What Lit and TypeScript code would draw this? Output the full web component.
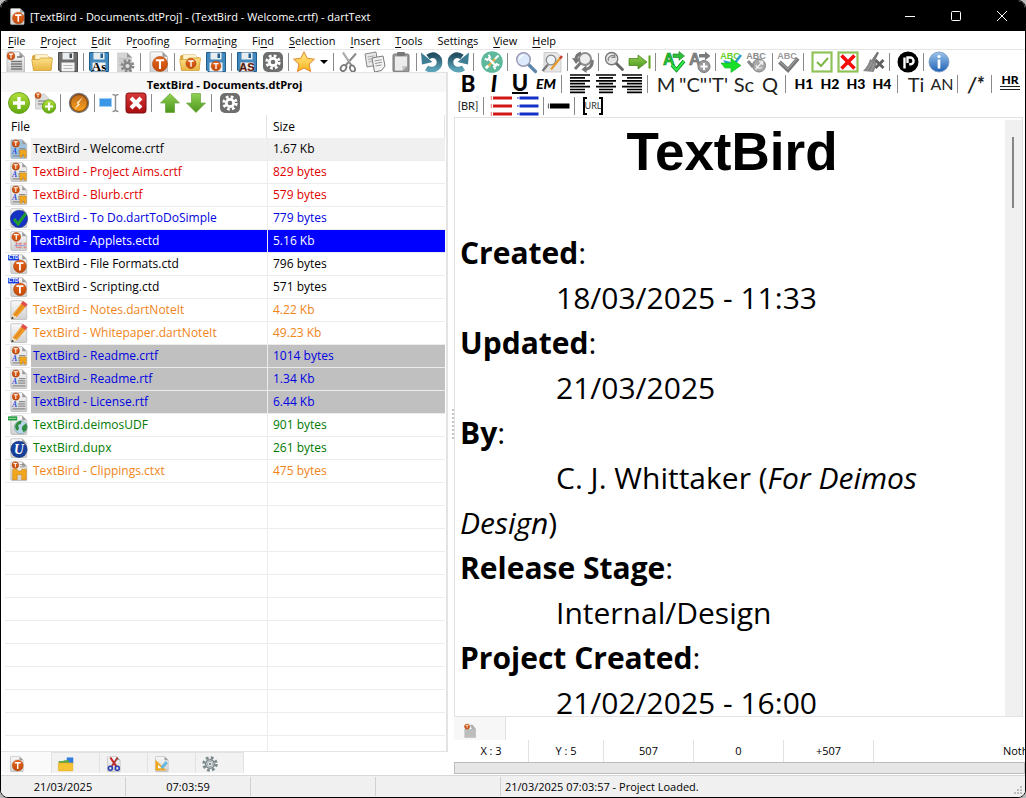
import { LitElement, html, svg, css, nothing } from "lit";
import { customElement, state } from "lit/decorators.js";
import { classMap } from "lit/directives/class-map.js";

/* ---------- shared drawing parts (22 x 22 grid) ---------- */

const page = (fill = "url(#paper)") => svg`
  <path d="M3 .8h11.500l5 5V20.500a1 1 0 0 1-1 1H3.500a1.500 1.500 0 0 1-1.500-1.500V1.800a1 1 0 0 1 1-1z" fill=${fill} stroke="#b4b4b4" stroke-width=".8"/>
  <path d="M14.500 .8v5h5z" fill="#9d9d9d"/>`;

const tBadge = (cx: number, cy: number, r: number) => svg`
  <circle cx=${cx} cy=${cy} r=${r} fill="url(#orange)" stroke="#a8410a" stroke-width=".6"/>
  <path d="M${cx - r * 0.55} ${cy - r * 0.5}h${r * 1.1}M${cx} ${cy - r * 0.5}v${r * 1.15}" stroke="#fff" stroke-width=${r * 0.28} fill="none"/>`;

const floppy = (fill: string, edge: string) => svg`
  <path d="M1.500 1.500h19v19H3l-1.500-1.500z" fill=${fill} stroke=${edge}/>
  <path d="M5.500 1.500h11v7h-11z" fill="#e8edf0"/><path d="M12.500 2.500h2.500v4.500h-2.500z" fill=${edge}/>
  <path d="M4.500 11.500h13v9h-13z" fill="#f4f4f4"/>`;

const folder = svg`
  <path d="M1 6q0-2 2-2h5l2 2h9q1.500 0 1.500 1.500V19H2.500z" fill="#d9a436"/>
  <path d="M4 3.500h12l3 4v6H4z" fill="#fff3cf" stroke="#d3b15e" stroke-width=".5"/>
  <path d="M.7 8.500h7.300l2-1.500h11.500L20 19.500H2.500z" fill="url(#gold)" stroke="#cf9a2c" stroke-width=".7"/>`;

const cogPath = (cx: number, cy: number, r: number, color: string, hole: string) => svg`
  <circle cx=${cx} cy=${cy} r=${r * 0.86} fill="none" stroke=${color} stroke-width=${r * 0.4}
    stroke-dasharray="${r * 0.37} ${r * 0.305}"/>
  <circle cx=${cx} cy=${cy} r=${r * 0.7} fill=${color}/><circle cx=${cx} cy=${cy} r=${r * 0.32} fill=${hole}/>`;

const cogTile = svg`<rect x="1" y="1" width="20" height="20" rx="5" fill="#6e6e6e"/>${cogPath(11, 11, 7.200, "#fff", "#6e6e6e")}`;

const lens = (ring: string, glass: string, handle: string) => svg`
  <path d="M13.500 13.500l7 7" stroke=${handle} stroke-width="3.200" stroke-linecap="round"/>
  <circle cx="8.500" cy="8.500" r="6.800" fill=${glass} stroke=${ring} stroke-width="1.500"/>
  <path d="M4.500 8a4.200 4.200 0 0 1 4-3.700" stroke="#fff" stroke-width="1.300" fill="none"/>`;

const abc = (fill: string) => svg`<text x="10" y="8" text-anchor="middle" font-family="Liberation Sans" font-weight="700" font-size="9" fill=${fill}>ABC</text>`;

const richDoc = (fill: string, clip: boolean) => svg`${page(fill)}${tBadge(7.500, 5, 4)}
  <text x="3.500" y="16" font-family="Liberation Serif" font-style="italic" font-weight="700" font-size="8" fill="#1f49d8">A</text>
  <path d="M11 10.500h7M10 13h8M10 15.500h8M4 18.500h14" stroke="#8d8d8d" stroke-width="1.300"/>
  ${clip ? svg`<path d="M12 12h7v8h-2.500v-3h-2v3H12z" fill="#f2a71e" stroke="#c9820c" stroke-width=".5"/>` : nothing}`;

const ctd = svg`${page()}${tBadge(12, 13.500, 7)}<rect x="-1" y="1" width="12" height="6" fill="#1237e0"/>
  <text x="5" y="6" text-anchor="middle" font-family="Liberation Sans" font-weight="700" font-size="5.500" fill="#fff">CTD</text>`;

const pencil = svg`${page()}<path d="M4 16L14 3l5 4L8.500 19z" fill="#f09a2a"/><path d="M13 4l2.500-3 5 3.800-2.500 3z" fill="#e1504f"/>
  <path d="M4 16l4.500 3-5.500 2z" fill="#f6dcae"/><path d="M3.300 18.500l2.200 1.500-3 1.300z" fill="#222"/><path d="M6 17.300L16 5" stroke="#c9730c" stroke-width=".8"/>`;

const bars = (widths: number[]) => svg`${widths.map((w, i) => svg`<path d="M${w < 0 ? 1 : 1 + (20 - w)} ${2 + i * 2.900}h${Math.abs(w)}" stroke="#000" stroke-width="1.700"/>`)}`;

const ICONS: Record<string, unknown> = {
  appPage: svg`${page()}${tBadge(12, 13, 7.500)}`,
  newDoc: svg`${page()}${tBadge(6, 5, 3.800)}<path d="M12 6h5M6 10.500h11M6 13h11M6 15.500h11M6 18h11" stroke="#777" stroke-width="1.400"/>`,
  folder,
  save: svg`${floppy("#6d6d6d", "#4c4c4c")}<path d="M6.500 14.500h9M6.500 17.500h9" stroke="#aaa" stroke-width=".8"/>`,
  saveAs: svg`${floppy("#4389bd", "#1f5d8c")}<text x="11" y="20" text-anchor="middle" font-family="Liberation Serif" font-weight="700" font-size="13" fill="#000">As</text>`,
  saveT: svg`${floppy("#4389bd", "#1f5d8c")}${tBadge(11, 15, 4.800)}`,
  saveAllAs: svg`${floppy("#4389bd", "#1f5d8c")}<text x="11" y="20" text-anchor="middle" font-family="Liberation Sans" font-weight="700" font-size="11" fill="#111" stroke="#e0522a" stroke-width=".3">AS</text>`,
  pageCog: svg`<path d="M3 1.500h10l5 5V21H3z" fill="#d4d4d4"/><path d="M13 1.500v5h5z" fill="#999"/><path d="M5 8h9M5 11h6M5 14h4" stroke="#b5b5b5"/>${cogPath(13.500, 15, 6.500, "#868686", "#ddd")}`,
  folderT: svg`${folder}${tBadge(12, 12.500, 5)}`,
  cog: cogTile,
  star: svg`<path d="M11 .8l3.200 6.500 7.200.9-5.300 5 1.400 7.300L11 17l-6.500 3.500 1.400-7.300-5.300-5 7.200-.9z" fill="url(#starfill)" stroke="#dd7a22" stroke-width=".9" stroke-linejoin="round"/>`,
  cut: svg`<path d="M5 1.500l8.500 13M18 2.500L8 14" stroke="#8b8b8b" stroke-width="2" fill="none"/><path d="M5 1.500l7 10" stroke="#ddd" stroke-width=".7"/><ellipse cx="5.500" cy="17" rx="2.600" ry="3.300" transform="rotate(35 5.500 17)" fill="none" stroke="#777" stroke-width="1.700"/><ellipse cx="14.500" cy="17.500" rx="2.400" ry="3.200" transform="rotate(-25 14.500 17.500)" fill="none" stroke="#777" stroke-width="1.700"/>`,
  copy: svg`<path d="M1 3l11-2 2 13-11 2z" fill="#e8e8e8" stroke="#888"/><path d="M3.500 6l7-1.200M4 8.500l7-1.200M4.400 11l5-1" stroke="#aaa"/><path d="M8 7l11-2 2 10-3.500 4.500-7 1.500z" fill="#f2f2f2" stroke="#7b7b7b"/><path d="M10.500 10l7-1.300M11 12.500l7-1.300M11.500 15l6-1.100" stroke="#999"/>`,
  paste: svg`<rect x="3" y="3" width="16" height="18" rx="1.500" fill="#9a9a9a" stroke="#747474"/><path d="M5 5.500h12V15l-4.500 4.500H5z" fill="#ececec"/><path d="M12.500 19.500V15H17z" fill="#c3c3c3"/><rect x="7" y="1" width="8" height="4" rx="1" fill="#777"/>`,
  undo: svg`<path d="M7 6C13 1.500 19 6 18.500 12c-.5 6-8 8.500-13 5" fill="none" stroke="url(#teal)" stroke-width="5.600"/><path d="M0 1.500l1 12 10.500-2.500z" fill="#3e7d93"/>`,
  redo: svg`<path d="M15 6C9 1.500 3 6 3.500 12c.5 6 8 8.500 13 5" fill="none" stroke="url(#teal)" stroke-width="5.600"/><path d="M22 1.500l-1 12-10.500-2.500z" fill="#3e7d93"/>`,
  tools: svg`<circle cx="11" cy="11" r="10.800" fill="#5db89c"/><path d="M7 15.500L15 7" stroke="#e7b24d" stroke-width="2.300"/><path d="M7 7l8.500 8.500" stroke="#fff" stroke-width="2.400"/><path d="M3.800 7.500l2.500 1.500L9 6.300 7.600 3.800M18.200 14.500l-2.500-1.500-2.700 2.700 1.400 2.500" fill="none" stroke="#fff" stroke-width="1.900"/><path d="M14 8l3.500-3.500" stroke="#fff" stroke-width="2"/><path d="M4.800 17.200l2.500-2.500" stroke="#fff" stroke-width="3"/>`,
  find: lens("#9b9bb5", "#dceafb", "#5d86a8"),
  findDoc: svg`<path d="M3 1.500h13l4 4V21H3z" fill="#e6e6e6" stroke="#bbb" stroke-width=".7"/><path d="M1.500 20L7 13.500" stroke="#777" stroke-width="2.300"/><circle cx="10" cy="9" r="4.800" fill="#eef3f7" stroke="#888" stroke-width="1.300"/><path d="M10 18.500L20 6" stroke="#e79a2b" stroke-width="2.200"/><path d="M19 7.500l2-2.500" stroke="#c7413a" stroke-width="2.500"/>`,
  findReplace: svg`<circle cx="13" cy="8" r="6" fill="#eee" stroke="#8d8d8d" stroke-width="2"/><path d="M8.500 12l-5.500 6" stroke="#777" stroke-width="3"/><path d="M4 8.500A7 7 0 0 1 9 2M20 9c1 5-2 9-7 9.500" stroke="#777" stroke-width="3" fill="none"/><path d="M0 7l4 6 4.500-5zM14.500 14l-5 4.500 5 3.500z" fill="#777"/>`,
  findGray: svg`<g transform="translate(1 0) scale(.9)">${lens("#777", "#e4e4e4", "#666")}<path d="M5 11a4.500 4.500 0 0 1 7-5M12 3v4H8" stroke="#888" stroke-width="1.300" fill="none"/></g>`,
  next: svg`<path d="M0 7.500h9V4l9 7-9 7v-3.500H0z" fill="url(#green)" stroke="#3d7d12" stroke-width=".7"/><path d="M20.500 4.500v13" stroke="#5aa21b" stroke-width="2"/>`,
  spellGo: svg`<text x="0" y="14" font-family="Liberation Sans" font-weight="700" font-size="16" fill="#23c933" stroke="#0c8a1b" stroke-width=".7">A</text><path d="M10 3h6V.5L21.500 5 16 9.300V6.500h-6z" fill="#2ebf3a" stroke="#0d7a1a" stroke-width=".6"/><path d="M9 14l4.500 5L21 10" fill="none" stroke="#0e8f1f" stroke-width="3.600"/><path d="M9 14l4.500 5L21 10" fill="none" stroke="#2fe84a" stroke-width="2"/>`,
  spellAdd: svg`<text x="0" y="14" font-family="Liberation Sans" font-weight="700" font-size="16" fill="#8a8a8a" stroke="#5f5f5f" stroke-width=".6">A</text><path d="M10 3h6V.5L21.500 5 16 9.300V6.500h-6z" fill="#7b7b7b"/><circle cx="15" cy="15.500" r="6" fill="#9b9b9b" stroke="#777"/><path d="M11.500 15.500h7M15 12v7" stroke="#fff" stroke-width="2"/>`,
  abcGo: svg`${abc("#62d02c")}<path d="M3 9l4 6 4-4z" fill="#2c9fd0"/><path d="M15 12l6-8" stroke="#2c9fd0" stroke-width="2.500"/><path d="M1 12h10V7.500l10 7-10 7V17H5z" fill="#18e029" stroke="#0fae20" stroke-width=".6"/>`,
  abcUndo: svg`${abc("#8a8a8a")}<circle cx="13" cy="14.500" r="6.500" fill="#a9a9a9" stroke="#808080"/><path d="M2 10l5 6" stroke="#888" stroke-width="3"/><path d="M9.500 18.500l7-8M13 10.500h3.500v3.500M10 14a4 4 0 0 0 6 2.500" stroke="#eee" stroke-width="1.400" fill="none"/>`,
  abcCheck: svg`${abc("#9a9a9a")}<path d="M2.500 11l8.500 8 10-11.500" stroke="#777" stroke-width="4" fill="none"/><path d="M3 11l8 7 9-10" stroke="#aaa" stroke-width="1" fill="none"/>`,
  boxCheck: svg`<rect x="1.500" y="1.500" width="19" height="19" fill="#fff" stroke="#8fc35a" stroke-width="2.200"/><path d="M6 11l4 4 7-8" fill="none" stroke="#7db743" stroke-width="1.900"/>`,
  boxCross: svg`<rect x="1.500" y="1.500" width="19" height="19" fill="#fff" stroke="#8fc35a" stroke-width="2.200"/><path d="M4.500 4.500l13 13M17.500 4.500l-13 13" stroke="#f50d0d" stroke-width="3.600"/>`,
  broom: svg`<path d="M14 .8l2 1-4.500 9-3-1.500z" fill="#777"/><path d="M7 8l6.500 3.500c0 4-2 7-3 9.500L0 20C4 16 6 12 7 8z" fill="#858585"/><path d="M9 11L4 20M11 12.500L8 21" stroke="#aaa" stroke-width=".7"/><path d="M12.500 9l8 8M20.500 9l-8 8" stroke="#5e5e5e" stroke-width="2.800"/>`,
  pMark: svg`<circle cx="11" cy="11" r="10.500" fill="#000"/><path d="M7.500 6.500v11M10.500 12V6.500h2.700a3.400 3.400 0 0 1 0 6.800h-1" stroke="#fff" stroke-width="2.400" fill="none"/>`,
  info: svg`<circle cx="11" cy="11" r="10" fill="url(#blue)" stroke="#7d9cc2" stroke-width=".9"/><circle cx="11" cy="5.500" r="1.600" fill="#fff"/><path d="M11 8.500v9" stroke="#fff" stroke-width="2.700"/>`,
  add: svg`<circle cx="11" cy="11" r="10.500" fill="url(#lime)" stroke="#5d9c11" stroke-width=".9"/><path d="M11 5v12M5 11h12" stroke="#fff" stroke-width="3.400"/>`,
  addDoc: svg`<path d="M1.500 2h9l4 4v11h-13z" fill="#ddd" stroke="#bbb" stroke-width=".6"/><path d="M4 9h8M4 12h8" stroke="#999" stroke-width="1.300"/>${tBadge(4, 3.500, 3)}<circle cx="15" cy="14.500" r="6.700" fill="url(#lime)" stroke="#5d9c11" stroke-width=".8"/><path d="M15 10.500v8M11 14.500h8" stroke="#fff" stroke-width="2.200"/>`,
  orb: svg`<circle cx="11" cy="11" r="9.500" fill="url(#amber)" stroke="#777" stroke-width="1.400"/><circle cx="11" cy="11" r="8.400" fill="none" stroke="#7a3c08" stroke-width="1"/><path d="M15 5l-4.500 6.500 1.500 1L6 17.500l4-5.500-1.500-1z" fill="#fff3c8"/>`,
  rename: svg`<rect x=".5" y="6.500" width="12" height="8" fill="#3a97e8" stroke="#9fcdf4"/><path d="M13.500 2.500q2.500 0 3 1.500.5-1.500 3-1.500M16.500 4v14M13.500 19.500q2.500 0 3-1.500.5 1.500 3 1.500" stroke="#8d8d8d" stroke-width="1.400" fill="none"/>`,
  remove: svg`<rect x="1" y="1" width="20" height="20" rx="2.500" fill="url(#redfill)" stroke="#7d0f10"/><path d="M6 6l10 10M16 6L6 16" stroke="#fff" stroke-width="4"/>`,
  up: svg`<path d="M11 1.500l9.500 9.500h-5v9.500h-9V11h-5z" fill="url(#green)" stroke="#6aa53b" stroke-width=".7"/>`,
  down: svg`<path d="M11 20.500L1.500 11h5V1.500h9V11h5z" fill="url(#green)" stroke="#6aa53b" stroke-width=".7"/>`,
  crtfOpen: richDoc("#9fc3df", true),
  crtf: richDoc("url(#paper)", true),
  rtf: richDoc("url(#paper)", false),
  todo: svg`${page()}<circle cx="11" cy="12" r="9.500" fill="#1433c4" stroke="#0b1f80" stroke-width=".6"/><path d="M5.500 12l4.500 5.500L18.500 6" fill="none" stroke="#1f9c2b" stroke-width="3.400"/>`,
  ectd: svg`${page()}${tBadge(8, 6.500, 4.800)}<path d="M8 11v7h4M8 14h4" stroke="#d77" fill="none"/><path d="M11 14h3M16 14h3M11 18h3M16 18h3" stroke="#e08a8a" stroke-width="2"/><path d="M6 16h12" stroke="#7f8fd8" stroke-width=".8"/>`,
  ctd,
  pencil,
  udf: svg`${page()}<circle cx="13" cy="13.500" r="7.200" fill="#b9d5ea" stroke="#8aa" stroke-width=".8"/><path d="M7 11q3-5 7-4.500l-1 3.500-3 1 1 4-2 2.500q-3-3-2-6.500zM15 12l4-3q2 4 0 8l-3 2-2-4z" fill="#2f8b3d"/><path d="M-1 1.500h10v4.500H-1z" fill="#1e9a3c"/><path d="M0 3.700h8" stroke="#bfe8c8" stroke-width=".9"/>`,
  dupx: svg`${page()}<circle cx="11" cy="12.500" r="9" fill="#16409c" stroke="#0c2766" stroke-width=".6"/><text x="11" y="18" text-anchor="middle" font-family="Liberation Serif" font-style="italic" font-weight="700" font-size="15" fill="#fff">U</text>`,
  clip: svg`${page()}${tBadge(7, 4.500, 3.700)}<path d="M4 9h5v2h5V9h5v11.500h-5V15H9v5.500H4z" fill="#f2a71e" stroke="#c9820c" stroke-width=".6"/><path d="M12 4h5M12 6.500h6" stroke="#888"/>`,
  tabFolders: svg`<path d="M12 2h9v8h-9z" fill="#2f7be0"/><path d="M1 7h6l2-1h6v11H1z" fill="#5aa547"/><path d="M.5 9.500h20V20.500H.5z" fill="#f6c333" stroke="#dfa61e" stroke-width=".6"/>`,
  tabCut: svg`${page()}<path d="M6 2l8 12" stroke="#c22" stroke-width="2.800"/><path d="M16 2L8 14" stroke="#a33" stroke-width="2.400"/><circle cx="6" cy="17" r="2.800" fill="none" stroke="#2338b4" stroke-width="2"/><circle cx="15.500" cy="17" r="2.800" fill="none" stroke="#2338b4" stroke-width="2"/>`,
  tabRuler: svg`${page()}<path d="M2 5v15h15z" fill="#f0a81f"/><path d="M5.500 12v5h5z" fill="#fff"/><path d="M9 15l7-8 3 3-7 8z" fill="#67b7dc"/>`,
  tabCog: svg`${cogPath(11, 11, 10, "#7d8a8c", "#eee")}<circle cx="11" cy="11" r="4.500" fill="none" stroke="#dfe4e4" stroke-width="1.200"/><circle cx="11" cy="11" r="1.800" fill="#7d8a8c"/>`,
  tabDoc: svg`<path d="M2 8h17v13H2z" fill="#bdbdbd"/><path d="M10 2h4l5 6h-6z" fill="#b0b0b0"/>${tBadge(6, 4.500, 3.800)}`,
  alignLeft: bars([-20, -15, -20, -15, -20, -15, -15]),
  alignCenter: svg`<path d="M1 2h20M4 4.900h14M1 7.800h20M4 10.700h14M1 13.600h20M4 16.500h14M4 19.400h14" stroke="#000" stroke-width="1.700"/>`,
  alignRight: bars([20, 15, 20, 15, 20, 15, 15]),
  listRed: svg`<path d="M2 3h19M2 11h19M2 19h19" stroke="#d01818" stroke-width="3"/><path d="M.3 1v4M.3 9v4M.3 17v4" stroke="#f08a8a" stroke-width="1.200"/>`,
  listBlue: svg`<path d="M2.500 3h19M2.500 11h19M2.500 19h19" stroke="#1430c8" stroke-width="3"/><path d="M0 3h1.700M0 11h1.700M0 19h1.700" stroke="#7a8cf0" stroke-width="2"/>`,
  rule: svg`<path d="M2 11H21.500" stroke="#000" stroke-width="5"/><path d="M.5 8.500v5" stroke="#666" stroke-width="1.200"/>`,
};

const icon = (name: string, cls = "ic") => html`<svg class=${cls} viewBox="0 0 22 22" aria-hidden="true">${ICONS[name]}</svg>`;

/* ---------- data ---------- */

type Tool = { id: string; label: string };
type Group = { lead?: boolean; tools: Tool[] };
const g = (lead: boolean, ...items: [string, string][]): Group => ({ lead, tools: items.map(([id, label]) => ({ id, label })) });

const MENUS: [string, string, string][] = [
  ["", "F", "ile"], ["", "P", "roject"], ["", "E", "dit"], ["P", "r", "oofing"], ["Forma", "t", "ing"], ["Fi", "n", "d"],
  ["", "S", "election"], ["", "I", "nsert"], ["", "T", "ools"], ["Settin", "g", "s"], ["", "V", "iew"], ["", "H", "elp"],
];

const MAIN: Group[] = [
  g(false, ["newDoc", "New"], ["folder", "Open"], ["save", "Save"]),
  g(false, ["saveAs", "Save as"], ["pageCog", "Document settings"]),
  g(true, ["appPage", "New project"]),
  g(false, ["folderT", "Open project"], ["saveT", "Save project"]),
  g(false, ["saveAllAs", "Save project as"], ["cog", "Project settings"]),
  g(false, ["star", "Favourites"], ["caret", "More favourites"]),
  g(false, ["cut", "Cut"], ["copy", "Copy"], ["paste", "Paste"]),
  g(false, ["undo", "Undo"], ["redo", "Redo"]),
  g(true, ["tools", "Tools"]),
  g(true, ["find", "Find"], ["findDoc", "Find in document"]),
  g(false, ["findReplace", "Replace"]),
  g(false, ["findGray", "Find again"], ["next", "Find next"]),
  g(true, ["spellGo", "Check spelling"], ["spellAdd", "Add word"]),
  g(false, ["abcGo", "Next word"], ["abcUndo", "Undo word"]),
  g(false, ["abcCheck", "Proof"]),
  g(true, ["boxCheck", "Accept"], ["boxCross", "Reject"], ["broom", "Clear"]),
  g(true, ["pMark", "Publish"]),
  g(false, ["info", "About"]),
];

const PROJECT: Group[] = [
  g(false, ["add", "Add"], ["addDoc", "Add document"]),
  g(true, ["orb", "Run"]),
  g(false, ["rename", "Rename"], ["remove", "Remove"]),
  g(true, ["up", "Move up"], ["down", "Move down"]),
  g(true, ["cog", "Settings"]),
];

const GLYPHS: Record<string, [string, string]> = {
  B: ["B", "heavy"], I: ["I", "heavy slant"], U: ["U", "heavy under"], EM: ["EM", "bold14 slant"],
  M: ["M", "thin"], C: ['"C"', "thin"], T: ["'T'", "thin"], Sc: ["Sc", "thin"], Q: ["Q", "thin"],
  H1: ["H1", "bold14"], H2: ["H2", "bold14"], H3: ["H3", "bold14"], H4: ["H4", "bold14"],
  Ti: ["Ti", "thin"], AN: ["AN", "mid"], CM: ["/*", "thin strong"], HR: ["HR", "hr"], BR: ["[BR]", "tiny"], URL: ["URL", "url"],
};

const FORMAT: Group[] = [
  g(false, ["B", "Bold"], ["I", "Italic"], ["U", "Underline"], ["EM", "Emphasis"]),
  g(true, ["alignLeft", "Align left"], ["alignCenter", "Align centre"], ["alignRight", "Align right"]),
  g(true, ["M", "Mono"], ["C", "Cite"], ["T", "Term"], ["Sc", "Small caps"], ["Q", "Quote"]),
  g(true, ["H1", "Heading 1"], ["H2", "Heading 2"], ["H3", "Heading 3"], ["H4", "Heading 4"]),
  g(true, ["Ti", "Title"], ["AN", "Annotation"]),
  g(true, ["CM", "Comment"]),
  g(true, ["HR", "Horizontal rule"]),
];

const INSERT: Group[] = [
  g(false, ["BR", "Line break"]),
  g(true, ["listRed", "Numbered list"], ["listBlue", "Bullet list"]),
  g(false, ["rule", "Rule"]),
  g(true, ["URL", "Link"]),
];

type FileRow = { name: string; size: string; tone: string; ic: string };
const FILES: FileRow[] = [
  { name: "TextBird - Welcome.crtf", size: "1.67 Kb", tone: "current", ic: "crtfOpen" },
  { name: "TextBird - Project Aims.crtf", size: "829 bytes", tone: "red", ic: "crtf" },
  { name: "TextBird - Blurb.crtf", size: "579 bytes", tone: "red", ic: "crtf" },
  { name: "TextBird - To Do.dartToDoSimple", size: "779 bytes", tone: "blue", ic: "todo" },
  { name: "TextBird - Applets.ectd", size: "5.16 Kb", tone: "picked", ic: "ectd" },
  { name: "TextBird - File Formats.ctd", size: "796 bytes", tone: "plain", ic: "ctd" },
  { name: "TextBird - Scripting.ctd", size: "571 bytes", tone: "plain", ic: "ctd" },
  { name: "TextBird - Notes.dartNoteIt", size: "4.22 Kb", tone: "amber", ic: "pencil" },
  { name: "TextBird - Whitepaper.dartNoteIt", size: "49.23 Kb", tone: "amber", ic: "pencil" },
  { name: "TextBird - Readme.crtf", size: "1014 bytes", tone: "shaded", ic: "crtf" },
  { name: "TextBird - Readme.rtf", size: "1.34 Kb", tone: "shaded", ic: "rtf" },
  { name: "TextBird - License.rtf", size: "6.44 Kb", tone: "shaded", ic: "rtf" },
  { name: "TextBird.deimosUDF", size: "901 bytes", tone: "green", ic: "udf" },
  { name: "TextBird.dupx", size: "261 bytes", tone: "green", ic: "dupx" },
  { name: "TextBird - Clippings.ctxt", size: "475 bytes", tone: "amber", ic: "clip" },
];

@customElement("app-root")
export class AppRoot extends LitElement {
  @state() private tab = 0;

  static styles = css`
    :host { display: block; height: 100vh; background: #b9b9b9; font-family: "Open Sans", "Noto Sans", sans-serif; font-size: 12px; color: #000; }
    * { box-sizing: border-box; }
    button { font: inherit; color: inherit; background: none; border: 0; padding: 0; margin: 0; }
    .defs { display: block; width: 0; height: 0; }
    .window { height: 100vh; display: flex; flex-direction: column; background: #fff; border: 1px solid #000; border-radius: 8px; overflow: hidden; }

    .title { height: 30px; flex: none; background: #000; color: #fff; display: flex; align-items: center; padding-left: 8px; }
    .title .ic { width: 17px; height: 17px; }
    .caption { margin: 0 auto 0 4px; font-size: 11px; font-weight: 400; white-space: nowrap; }
    .winbtn { width: 46px; height: 30px; display: grid; place-items: center; }
    .winbtn svg { width: 12px; height: 12px; fill: none; stroke: #fff; }

    .menus { height: 18px; flex: none; display: flex; font-size: 11px; line-height: 20px; }
    .menus button { padding: 0 8px 0 7px; white-space: nowrap; }
    .menus u { text-underline-offset: 2px; }

    .tools { display: flex; flex: none; height: 22px; }
    .main { height: 23px; padding: 1px 0 0 2px; border-top: 1px solid #e6e6e6; }
    .group { display: flex; flex: none; }
    .group.lead { padding-left: 3px; }
    .group + .group::before { content: ""; width: 1px; height: 18px; margin: 2px; background: #8a8a8a; }
    .group.group.lead::before { margin-left: -1px; margin-right: 5px; }
    .tool { width: 26px; height: 22px; display: grid; place-items: center; flex: none; white-space: nowrap; font-family: Lato, "Open Sans", sans-serif; line-height: 22px; }
    .tool.caret { width: 14px; }
    .tool.caret::before { content: ""; border: 4px solid transparent; border-top-color: #000; border-bottom: 0; }
    .ic { width: 22px; height: 22px; display: block; overflow: visible; }
    .heavy { font-size: 22px; font-weight: 900; }
    .slant { font-style: italic; }
    .under span { line-height: 18px; border-bottom: 2px solid #000; }
    .bold14 { font-size: 14px; font-weight: 900; }
    .thin { font-size: 20px; color: #222; }
    .strong { font-weight: 700; font-style: italic; }
    .mid { font-size: 16px; color: #222; }
    .tiny { font-size: 11px; color: #222; }
    .hr { font-size: 12px; font-weight: 900; }
    .hr span { width: 20px; line-height: 12px; border-bottom: 4px double #222; margin-bottom: 4px; }
    .url { font-size: 9px; color: #333; }
    .url span { width: 20px; height: 18px; line-height: 18px; background:
      linear-gradient(#000, #000) 0 0 / 2px 100%, linear-gradient(#000, #000) 100% 0 / 2px 100%,
      linear-gradient(#000, #000) 0 0 / 4px 2px, linear-gradient(#000, #000) 0 100% / 4px 2px,
      linear-gradient(#000, #000) 100% 0 / 4px 2px, linear-gradient(#000, #000) 100% 100% / 4px 2px; background-repeat: no-repeat; }

    .work { flex: 1; min-height: 0; display: grid; grid-template-columns: 447px 6px minmax(0, 1fr); }
    .left { display: flex; flex-direction: column; min-height: 0; }
    .panel { flex: 1; min-height: 0; display: flex; flex-direction: column; border: solid #e3e3e3; border-width: 1px 2px 1px 0; }
    .heading { height: 19px; flex: none; background: #f7f7f7; text-align: center; font-size: 11px; font-weight: 700; line-height: 23px; margin: 0; padding-left: 2px; }
    .panel .tools { padding-left: 5px; height: 23px; }
    .list { flex: 1; min-height: 0; overflow: hidden; margin: 0 1px 0 4px; background:
      linear-gradient(#ececec, #ececec) 262px 0 / 1px 100% no-repeat,
      repeating-linear-gradient(#fff 0 22px, #ececec 22px 23px); }
    table { width: 100%; border-collapse: separate; border-spacing: 0; table-layout: fixed; }
    th, td { height: 23px; padding: 0 0 0 6px; text-align: left; font-weight: 400; line-height: 22px; white-space: nowrap; }
    th { background: #fff; border-right: 1px solid #e3e3e3; line-height: 23px; }
    td { border-bottom: 1px solid #ececec; background: #fff; }
    td + td { border-left: 1px solid #ececec; padding-left: 5px; }
    th + th { padding-left: 6px; }
    .name { padding: 0; }
    .file { display: flex; }
    .file .ic { width: 20px; height: 22px; margin: 0 2px 0 4px; flex: none; }
    .file span { flex: 1; padding-left: 2px; }
    .red { color: #e00000; } .blue { color: #0000e0; } .amber { color: #f08418; } .green { color: #007a00; }
    .current .file span, .current .size { background: #f0f0f0; }
    .picked { color: #fff; } .picked .file span, .picked .size { background: #00f; }
    .shaded { color: #0000e0; } .shaded .file span, .shaded .size { background: #c0c0c0; }

    .tabs { display: flex; height: 22px; flex: none; margin-bottom: 1px; }
    .tab { width: 48px; height: 21px; background: #f2f2f2; border: 1px solid #e2e2e2; border-width: 1px 1px 0 0; padding: 1px 0 0 6px; }
    .tab .ic { width: 16px; height: 16px; }
    .tab.on { width: 51px; padding-left: 8px; padding-top: 3px; background: #fafafa; border-top: 0; }

    .grip { display: grid; place-items: center; }
    .grip i { width: 2px; height: 30px; background: repeating-linear-gradient(#c2c2c2 0 2px, transparent 2px 4px); margin-left: 3px; }

    .right { display: flex; flex-direction: column; min-width: 0; min-height: 0; padding-top: 1px; }
    .right .tools { padding-left: 1px; }
    .editor { flex: 1; min-height: 0; margin-right: 2px; display: flex; border: 1px solid #e2e2e2; padding: 2px 0 0; }
    .doc { flex: 1; min-width: 0; overflow: hidden; padding: 0 1px 0 5px; font-size: 30px; line-height: 45px; }
    h1 { margin: 2px 0 49px; text-align: center; font: 700 53px/59px "Liberation Sans", Arial, sans-serif; }
    dl, dd { margin: 0; }
    dt b { font-weight: 700; }
    dd { text-indent: 96px; }
    .track { width: 17px; flex: none; background: #f0f0f0; padding: 17px 0 0 7px; }
    .thumb { width: 2px; height: 71px; background: #858585; }
    .doctab { width: 52px; height: 23px; flex: none; background: #f7f7f7; border-right: 1px solid #e2e2e2; padding: 4px 0 0 9px; }
    .doctab .ic { width: 15px; height: 16px; }
    .counts { display: flex; height: 22px; flex: none; overflow: hidden; line-height: 21px; font-size: 11px; }
    .counts span { width: 90px; flex: none; text-align: center; border-right: 1px solid #e2e2e2; }
    .counts .xy { width: 75px; }
    .counts .wide { width: 300px; }
    .progress { height: 12px; flex: none; margin-bottom: 1px; background: #e6e6e6; border: 1px solid #bcbcbc; }

    .status { display: flex; height: 22px; flex: none; background: #f0f0f0; border-top: 1px solid #d7d7d7; font-size: 11px; line-height: 22px; }
    .status span { width: 125px; flex: none; text-align: center; border-right: 1px solid #d0d0d0; margin: 1px 0; line-height: 20px; }
    .status .msg { flex: 1; text-align: left; border: 0; padding-left: 4px; }
    .status svg { width: 10px; height: 10px; align-self: flex-end; margin: 0 2px 2px 0; fill: #bdbdbd; }
  `;

  private bar(groups: Group[], cls = "") {
    return html`<div class="tools ${cls}" role="toolbar">
      ${groups.map((grp) => html`<div class=${classMap({ group: true, lead: !!grp.lead })}>
        ${grp.tools.map((t) => {
          const glyph = GLYPHS[t.id];
          if (glyph) return html`<button class="tool ${glyph[1]}" aria-label=${t.label}><span>${glyph[0]}</span></button>`;
          if (t.id === "caret") return html`<button class="tool caret" aria-label=${t.label}></button>`;
          return html`<button class="tool" aria-label=${t.label}>${icon(t.id)}</button>`;
        })}
      </div>`)}
    </div>`;
  }

  private gradient(id: string, a: string, b: string) {
    return svg`<linearGradient id=${id} x1="0" y1="0" x2="0" y2="1"><stop offset="0" stop-color=${a}/><stop offset="1" stop-color=${b}/></linearGradient>`;
  }

  render() {
    const tabs: [string, string][] = [["appPage", "Project"], ["tabFolders", "Folders"], ["tabCut", "Clippings"], ["tabRuler", "Templates"], ["tabCog", "Options"]];
    return html`
      <svg class="defs" aria-hidden="true"><defs>
        ${this.gradient("paper", "#fafafa", "#cfcfcf")}${this.gradient("orange", "#e8641c", "#c24a08")}
        ${this.gradient("gold", "#fbe08a", "#e9b440")}${this.gradient("starfill", "#fff08a", "#f9b01c")}
        ${this.gradient("teal", "#234f63", "#5ba3b8")}${this.gradient("green", "#8fd052", "#4c961c")}
        ${this.gradient("blue", "#9cc4ec", "#1e62b4")}${this.gradient("lime", "#b4e03c", "#5fa80e")}
        ${this.gradient("amber", "#b9651c", "#ffa81e")}${this.gradient("redfill", "#d93838", "#a80e10")}
      </defs></svg>
      <div class="window">
        <header class="title">
          ${icon("appPage")}
          <div class="caption">[TextBird - Documents.dtProj] - (TextBird - Welcome.crtf) - dartText</div>
          <button class="winbtn" aria-label="Minimise"><svg viewBox="0 0 12 12"><path d="M1 6.500h10"/></svg></button>
          <button class="winbtn" aria-label="Maximise"><svg viewBox="0 0 12 12"><rect x="1.500" y="1.500" width="9" height="9" rx="1"/></svg></button>
          <button class="winbtn" aria-label="Close"><svg viewBox="0 0 12 12"><path d="M1 1l10 10M11 1L1 11"/></svg></button>
        </header>
        <nav class="menus">${MENUS.map(([a, u, b]) => html`<button>${a}<u>${u}</u>${b}</button>`)}</nav>
        ${this.bar(MAIN, "main")}
        <main class="work">
          <section class="left">
            <div class="panel">
              <h2 class="heading">TextBird - Documents.dtProj</h2>
              ${this.bar(PROJECT)}
              <div class="list">
                <table>
                  <colgroup><col style="width:262px"><col></colgroup>
                  <thead><tr><th>File</th><th>Size</th></tr></thead>
                  <tbody>${FILES.map((f) => html`<tr class=${f.tone}>
                    <td class="name"><div class="file">${icon(f.ic)}<span>${f.name}</span></div></td>
                    <td class="size">${f.size}</td></tr>`)}</tbody>
                </table>
              </div>
            </div>
            <div class="tabs" role="tablist">${tabs.map(([id, label], i) => html`<button role="tab" aria-label=${label}
              class=${classMap({ tab: true, on: this.tab === i })} @click=${() => (this.tab = i)}>${icon(id)}</button>`)}</div>
          </section>
          <div class="grip"><i></i></div>
          <section class="right">
            ${this.bar(FORMAT)}
            ${this.bar(INSERT)}
            <div class="editor">
              <article class="doc">
                <h1>TextBird</h1>
                <dl>
                  <dt><b>Created</b>:</dt><dd>18/03/2025 - 11:33</dd>
                  <dt><b>Updated</b>:</dt><dd>21/03/2025</dd>
                  <dt><b>By</b>:</dt><dd>C. J. Whittaker (<em>For Deimos Design</em>)</dd>
                  <dt><b>Release Stage</b>:</dt><dd>Internal/Design</dd>
                  <dt><b>Project Created</b>:</dt><dd>21/02/2025 - 16:00</dd>
                </dl>
              </article>
              <div class="track"><div class="thumb"></div></div>
            </div>
            <button class="doctab" aria-label="Document">${icon("tabDoc")}</button>
            <div class="counts"><span class="xy">X : 3</span><span class="xy">Y : 5</span><span>507</span><span>0</span><span>+507</span><span class="wide">Nothing</span></div>
            <div class="progress" role="progressbar" aria-label="Progress"></div>
          </section>
        </main>
        <footer class="status"><span>21/03/2025</span><span>07:03:59</span><span></span><span></span><span class="msg">21/03/2025 07:03:57 - Project Loaded.</span>
          <svg viewBox="0 0 10 10"><path d="M7 1h2v2H7zM4 4h2v2H4zM7 4h2v2H7zM1 7h2v2H1zM4 7h2v2H4zM7 7h2v2H7z"/></svg></footer>
      </div>`;
  }
}
